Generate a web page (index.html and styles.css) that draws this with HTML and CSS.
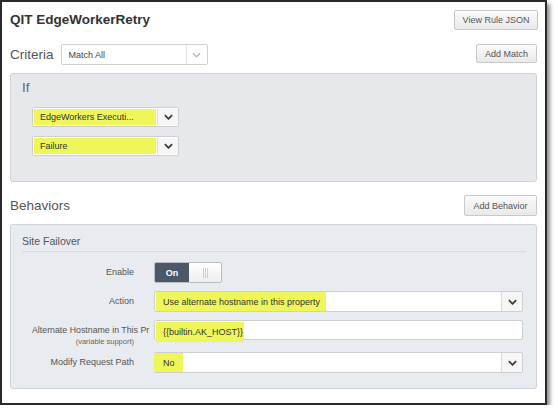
FILE: index.html
```html
<!DOCTYPE html>
<html>
<head>
<meta charset="utf-8">
<link rel="stylesheet" href="styles.css">
</head>
<body>
<div class="frame">
  <div class="row header">
    <h1 class="title">QIT EdgeWorkerRetry</h1>
    <button class="btn btn-json">View Rule JSON</button>
  </div>

  <div class="row criteria-row">
    <div class="criteria-left">
      <span class="section-label">Criteria</span>
      <div class="select match-select">
        <span class="select-text">Match All</span>
        <span class="chev chev-light"><svg width="9" height="6" viewBox="0 0 10 6"><polyline points="1,1 5,5 9,1" fill="none" stroke="#b8b8b8" stroke-width="1.4"/></svg></span>
      </div>
    </div>
    <button class="btn btn-match">Add Match</button>
  </div>

  <div class="panel if-panel">
    <div class="if-label">If</div>
    <div class="select cond-select">
      <span class="hl hl-fill">EdgeWorkers Executi...</span>
      <span class="chev"><svg width="9" height="6" viewBox="0 0 10 6"><polyline points="1,1 5,5 9,1" fill="none" stroke="#3a3a3a" stroke-width="2"/></svg></span>
    </div>
    <div class="select cond-select cond-second">
      <span class="hl hl-fill">Failure</span>
      <span class="chev"><svg width="9" height="6" viewBox="0 0 10 6"><polyline points="1,1 5,5 9,1" fill="none" stroke="#3a3a3a" stroke-width="2"/></svg></span>
    </div>
  </div>

  <div class="row behaviors-row">
    <span class="section-label">Behaviors</span>
    <button class="btn btn-behavior">Add Behavior</button>
  </div>

  <div class="panel site-panel">
    <div class="site-title">Site Failover</div>
    <div class="divider"></div>

    <div class="form-row row-enable">
      <div class="label">Enable</div>
      <div class="toggle">
        <span class="toggle-on">On</span>
        <span class="toggle-off"><span class="grip"></span><span class="grip"></span><span class="grip"></span></span>
      </div>
    </div>

    <div class="form-row row-action">
      <div class="label">Action</div>
      <div class="select form-select">
        <span class="select-body"><span class="hl hl-action">Use alternate hostname in this property</span></span>
        <span class="chev"><svg width="9" height="6" viewBox="0 0 10 6"><polyline points="1,1 5,5 9,1" fill="none" stroke="#3a3a3a" stroke-width="2"/></svg></span>
      </div>
    </div>

    <div class="form-row row-alt">
      <div class="label label-long">
        <div class="label-main">Alternate Hostname in This Pr</div>
        <div class="label-sub">(variable support)</div>
      </div>
      <div class="input"><span class="hl hl-host">{{builtin.AK_HOST}}</span></div>
    </div>

    <div class="form-row row-modify">
      <div class="label">Modify Request Path</div>
      <div class="select form-select">
        <span class="select-body"><span class="hl hl-no">No</span></span>
        <span class="chev"><svg width="9" height="6" viewBox="0 0 10 6"><polyline points="1,1 5,5 9,1" fill="none" stroke="#3a3a3a" stroke-width="2"/></svg></span>
      </div>
    </div>
  </div>
</div>
</body>
</html>
```

FILE: styles.css
```css
* { box-sizing: border-box; }

html, body {
  margin: 0;
  padding: 0;
  background: #ffffff;
}

body {
  font-family: "Liberation Sans", Arial, sans-serif;
  color: #333;
}

.frame {
  width: 547px;
  height: 405px;
  border: 2px solid #2a2a2a;
  background: #fff;
  padding: 8px 8px 0 8px;
  box-shadow: 3px 4px 4px rgba(0, 0, 0, 0.45);
}

.row {
  display: flex;
  align-items: center;
  justify-content: space-between;
}

.header {
  height: 20px;
}

.title {
  margin: 0;
  font-size: 13.5px;
  font-weight: bold;
  color: #333;
  line-height: 20px;
}

.btn {
  font-family: "Liberation Sans", Arial, sans-serif;
  font-size: 9px;
  color: #555;
  background: linear-gradient(#fbfbfb, #e9e9e9);
  border: 1px solid #c9c9c9;
  border-radius: 2px;
  padding: 0;
  margin: 0;
}

.btn-json {
  width: 84px;
  height: 20px;
  margin-right: -1px;
}

.criteria-row {
  margin-top: 14px;
  height: 21px;
  align-items: flex-start;
}

.criteria-left {
  display: flex;
  align-items: center;
  height: 21px;
}

.section-label {
  font-size: 13.5px;
  color: #555;
  line-height: 20px;
}

.select {
  display: flex;
  align-items: stretch;
  background: #fff;
  border: 1px solid #cfcfcf;
  border-radius: 2px;
  font-size: 9px;
  color: #333;
}

.match-select {
  margin-left: 7px;
  width: 147px;
  height: 21px;
}

.select-text {
  flex: 1;
  display: flex;
  align-items: center;
  padding-left: 7px;
  color: #444;
}

.chev {
  width: 21px;
  display: flex;
  align-items: center;
  justify-content: center;
  border-left: 1px solid #dcdcdc;
  background: #f6f6f6;
}

.chev-light {
  background: #fff;
  border-left: 1px solid #e2e2e2;
}

.btn-match {
  width: 61px;
  height: 19px;
}

.panel {
  border: 1px solid #cfd2d7;
  border-radius: 3px;
}

.if-panel {
  margin-top: 8px;
  height: 109px;
  background: #e7e8ec;
  padding: 6px 11px 0 11px;
}

.if-label {
  font-size: 13.5px;
  color: #666;
  line-height: 16px;
}

.cond-select {
  margin-top: 11px;
  margin-left: 10px;
  width: 147px;
  height: 20px;
  padding: 1px 0 1px 1px;
}

.cond-second {
  margin-top: 9px;
}

.hl {
  background: #eff65a;
  color: #333;
  display: flex;
  align-items: center;
  font-size: 9px;
}

.hl-fill {
  flex: 1;
  padding-left: 6px;
}

.cond-select .chev {
  margin-left: 1px;
}

.behaviors-row {
  margin-top: 13px;
  height: 21px;
}

.btn-behavior {
  width: 73px;
  height: 21px;
}

.site-panel {
  margin-top: 8px;
  height: 165px;
  background: #e8ebef;
  padding: 9px 10px 0 11px;
}

.site-title {
  font-size: 10.5px;
  color: #555;
  line-height: 14px;
}

.divider {
  margin-top: 3px;
  height: 1px;
  background: #d7dade;
}

.form-row {
  display: flex;
  align-items: flex-start;
  padding: 0 3px 0 10px;
}

.row-enable { margin-top: 10px; }
.row-action { margin-top: 8px; }
.row-alt { margin-top: 8px; }
.row-modify { margin-top: 5px; }

.label {
  width: 120px;
  flex: none;
  margin-right: 2px;
  padding-right: 18px;
  text-align: right;
  font-size: 9px;
  color: #555;
  line-height: 21px;
  white-space: nowrap;
}

.label-long {
  line-height: 20px;
  padding-right: 0;
}

.label-main {
  line-height: 20px;
  font-size: 8.8px;
  text-align: left;
}

.label-sub {
  font-size: 7.5px;
  line-height: 10px;
  margin-top: -3px;
  padding-right: 18px;
  color: #666;
}

.toggle {
  display: flex;
  width: 68px;
  height: 21px;
  border: 1px solid #b9bcc1;
  border-radius: 2px;
  overflow: hidden;
}

.toggle-on {
  width: 34px;
  background: #4b586a;
  color: #fff;
  font-weight: bold;
  font-size: 9px;
  display: flex;
  align-items: center;
  justify-content: center;
}

.toggle-off {
  flex: 1;
  background: linear-gradient(#ffffff, #eeeeee);
  display: flex;
  align-items: center;
  justify-content: center;
  gap: 1px;
}

.grip {
  width: 1px;
  height: 10px;
  background: #cfcfcf;
}

.form-select {
  flex: 1;
  height: 21px;
}

.select-body {
  flex: 1;
  display: flex;
  align-items: stretch;
  padding: 0 0 0 1px;
}

.hl-action {
  padding: 0 6px 0 7px;
}

.hl-no {
  margin-left: -2px;
  padding: 0 8px 0 9px;
}

.input {
  flex: 1;
  height: 20px;
  background: #fff;
  border: 1px solid #cfcfcf;
  border-radius: 2px;
  display: flex;
  align-items: stretch;
  padding-left: 1px;
}

.hl-host {
  margin-top: 1px;
  margin-bottom: -3px;
  padding: 0 1px 0 7px;
}
```
